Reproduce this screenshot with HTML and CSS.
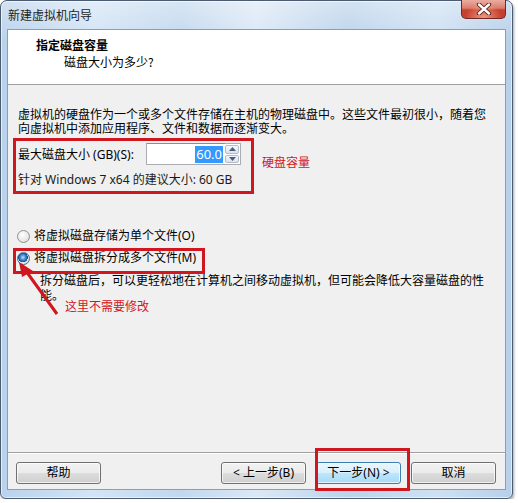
FILE: index.html
```html
<!DOCTYPE html>
<html lang="zh-CN">
<head>
<meta charset="utf-8">
<title>新建虚拟机向导</title>
<link rel="stylesheet" href="styles.css">
</head>
<body>
<div class="window">
  <div class="titlebar">
    <span class="title">新建虚拟机向导</span>
    <span class="close">
      <svg width="18" height="12" viewBox="0 0 18 12"><path d="M4 1.5 L14 10.5 M14 1.5 L4 10.5" stroke="#5a1a14" stroke-width="4.2" stroke-linecap="round"/><path d="M4 1.5 L14 10.5 M14 1.5 L4 10.5" stroke="#ffffff" stroke-width="2.4" stroke-linecap="round"/></svg>
    </span>
  </div>
  <div class="client">
    <div class="header">
      <div class="h-title">指定磁盘容量</div>
      <div class="h-sub">磁盘大小为多少?</div>
    </div>
    <div class="body">
      <p class="intro"><span class="line">虚拟机的硬盘作为一个或多个文件存储在主机的物理磁盘中。这些文件最初很小，随着您</span><span class="line">向虚拟机中添加应用程序、文件和数据而逐渐变大。</span></p>
      <div class="size-row">
        <span class="size-label">最大磁盘大小 (GB)(S):</span>
        <div class="spin">
          <div class="spin-input"><span class="sel">60.0</span></div>
          <div class="spin-btns">
            <span class="spin-btn"><svg width="7" height="4" viewBox="0 0 7 4"><path d="M0 4 L3.5 0 L7 4 Z" fill="#4a5e80"/></svg></span>
            <span class="spin-btn"><svg width="7" height="4" viewBox="0 0 7 4"><path d="M0 0 L3.5 4 L7 0 Z" fill="#4a5e80"/></svg></span>
          </div>
        </div>
      </div>
      <div class="rec">针对 Windows 7 x64 的建议大小: 60 GB</div>
      <div class="radio-group">
        <div class="radio-row"><span class="radio"></span><span>将虚拟磁盘存储为单个文件(O)</span></div>
        <div class="radio-row"><span class="radio checked"></span><span>将虚拟磁盘拆分成多个文件(M)</span></div>
        <p class="desc"><span class="line">拆分磁盘后，可以更轻松地在计算机之间移动虚拟机，但可能会降低大容量磁盘的性</span><span class="line">能。</span></p>
      </div>
    </div>
    <div class="footer">
      <button class="btn">帮助</button>
      <span class="spacer"></span>
      <button class="btn">&lt; 上一步(B)</button>
      <button class="btn btn-default">下一步(N) &gt;</button>
      <button class="btn">取消</button>
    </div>
  </div>

  <div class="mark mark-size"></div>
  <div class="note note-size">硬盘容量</div>
  <div class="mark mark-radio"></div>
  <svg class="arrow" width="60" height="60" viewBox="0 0 60 60">
    <path d="M46 55 L15 12" stroke="#d0161e" stroke-width="3" fill="none"/>
    <path d="M8 3 L22 12 L11 18 Z" fill="#d0161e"/>
  </svg>
  <div class="note note-radio">这里不需要修改</div>
  <div class="mark mark-next"></div>
</div>
</body>
</html>
```
FILE: styles.css
```css
html, body {
  margin: 0;
  padding: 0;
  background: #ffffff;
}

body {
  font-family: "Noto Sans", "Noto Sans CJK SC", sans-serif;
  font-size: 12px;
  color: #000;
}

.window {
  position: relative;
  box-sizing: border-box;
  width: 513px;
  height: 499px;
  padding: 0 6px 8px 6px;
  border: 1px solid #4b5b70;
  border-radius: 7px 7px 6px 6px;
  background:
    linear-gradient(to bottom, rgba(255,255,255,0.35), rgba(255,255,255,0) 40px),
    linear-gradient(to right, #b9d2ec 0%, #d3e4f5 18%, #c2d8ee 35%, #dbe8f6 50%, #bcd3eb 68%, #cfe1f3 85%, #b7cfe9 100%);
  box-shadow: 1px 2px 3px rgba(0,0,0,0.35), inset 0 0 0 1px rgba(255,255,255,0.6);
  display: flex;
  flex-direction: column;
}

.titlebar {
  height: 28px;
  display: flex;
  align-items: flex-start;
  flex: none;
}

.title {
  margin-left: 1px;
  margin-top: 6px;
  line-height: 16px;
  font-family: "Noto Sans CJK SC", sans-serif;
  color: #1e1e1e;
}

.close {
  margin-left: auto;
  margin-top: -1px;
  width: 45px;
  height: 19px;
  box-sizing: border-box;
  border: 1px solid #6e2a22;
  border-top: none;
  border-radius: 0 0 5px 5px;
  background:
    radial-gradient(ellipse at 50% 100%, rgba(255,190,160,0.7) 0%, rgba(255,190,160,0) 60%),
    linear-gradient(to bottom, #e9aea2 0%, #dc7d6c 45%, #c8402e 55%, #c5402f 100%);
  display: flex;
  align-items: center;
  justify-content: center;
}

.close svg { display: block; }

.client {
  flex: 1;
  display: flex;
  flex-direction: column;
  background: #f0f0f0;
  border: 1px solid #8b9db5;
}

.header {
  flex: none;
  height: 55px;
  box-sizing: border-box;
  background: #ffffff;
  border-bottom: 1px solid #a0a0a0;
  padding: 7px 0 0 28px;
  font-family: "Noto Sans CJK SC", sans-serif;
}

.h-title {
  font-weight: bold;
  line-height: 16px;
}

.h-sub {
  line-height: 16px;
  margin-top: 1px;
  padding-left: 28px;
}

.body {
  flex: none;
  padding: 22px 0 0 10px;
}

.intro {
  margin: 0;
  white-space: nowrap;
  font-family: "Noto Sans CJK SC", sans-serif;
}

.line {
  display: block;
  height: 14px;
  line-height: 14px;
}

.size-row {
  margin-top: 8px;
  display: flex;
  align-items: center;
  height: 22px;
}

.size-label {
  width: 128px;
  flex: none;
  white-space: nowrap;
}

.spin {
  display: flex;
  height: 22px;
}

.spin-input {
  width: 79px;
  height: 22px;
  box-sizing: border-box;
  background: #fff;
  border: 1px solid #abadb3;
  border-top-color: #888e99;
  border-right: none;
  display: flex;
  align-items: center;
  justify-content: flex-end;
  padding-right: 2px;
}

.sel {
  background: #3399ff;
  color: #fff;
  line-height: 17px;
  font-size: 13px;
  padding: 0 1px;
}

.spin-btns {
  width: 16px;
  display: flex;
  flex-direction: column;
  gap: 1px;
  box-sizing: border-box;
  border: 1px solid #abadb3;
  border-left: none;
  background: #fff;
  padding: 1px 1px 1px 0;
}

.spin-btn {
  flex: 1;
  border: 1px solid #b5bcc7;
  border-radius: 2px;
  background: linear-gradient(to bottom, #f5f7fa, #dde3eb);
  display: flex;
  align-items: center;
  justify-content: center;
}

.spin-btn svg { display: block; }

.rec {
  margin-top: 8px;
  line-height: 14px;
  color: #1a1a1a;
}

.radio-group {
  margin-top: 41px;
  display: flex;
  flex-direction: column;
  gap: 6px;
}

.radio-row {
  height: 16px;
  display: flex;
  align-items: center;
  gap: 4px;
  line-height: 16px;
}

.radio {
  width: 13px;
  height: 13px;
  box-sizing: border-box;
  margin-left: -1px;
  border-radius: 50%;
  border: 1px solid #8f8f8f;
  background: radial-gradient(circle at 40% 35%, #ffffff 0%, #e8e8e8 60%, #cfcfcf 100%);
  display: inline-block;
  flex: none;
}

.radio.checked {
  border-color: #4d6b8d;
  background:
    radial-gradient(circle at 45% 40%, #bfe0ff 0%, #3f8ad3 30%, #164f8c 52%, transparent 56%),
    radial-gradient(circle at 40% 35%, #ffffff 0%, #e4e4e4 70%, #c8c8c8 100%);
}

.desc {
  margin: 0 0 0 22px;
  white-space: nowrap;
  font-family: "Noto Sans CJK SC", sans-serif;
}

.desc .line {
  height: 15px;
  line-height: 15px;
}

.footer {
  margin-top: auto;
  flex: none;
  display: flex;
  align-items: center;
  gap: 10px;
  padding: 9px 9px 5px 8px;
  border-top: 1px solid #a0a0a0;
  box-shadow: inset 0 1px 0 #ffffff;
}

.spacer { flex: 1; }

.btn {
  width: 85px;
  height: 22px;
  margin: 0;
  padding: 0;
  box-sizing: border-box;
  border: 1px solid #707070;
  border-radius: 3px;
  background: linear-gradient(to bottom, #f2f2f2 0%, #ebebeb 50%, #dddddd 50%, #cfcfcf 100%);
  box-shadow: inset 0 0 0 1px rgba(255,255,255,0.7);
  font-family: "Noto Sans", "Noto Sans CJK SC", sans-serif;
  font-size: 12px;
  color: #000;
  line-height: 18px;
}

.btn-default {
  border-color: #3c7fb1;
  background: linear-gradient(to bottom, #eaf6fd 0%, #d9f0fc 50%, #bee6fd 50%, #a7d9f5 100%);
}

.mark {
  position: absolute;
  box-sizing: border-box;
  border: 3px solid #d0161e;
}

.mark-size { left: 12px; top: 137px; width: 241px; height: 56px; }
.mark-radio { left: 12px; top: 247px; width: 192px; height: 26px; }
.mark-next { left: 314px; top: 447px; width: 95px; height: 43px; }

.note {
  position: absolute;
  color: #d0161e;
  font-family: "Noto Sans CJK SC", sans-serif;
  line-height: 16px;
  white-space: nowrap;
}

.note-size { left: 261px; top: 153px; }
.note-radio { left: 64px; top: 297px; }

.arrow {
  position: absolute;
  left: 10px;
  top: 258px;
}
```
